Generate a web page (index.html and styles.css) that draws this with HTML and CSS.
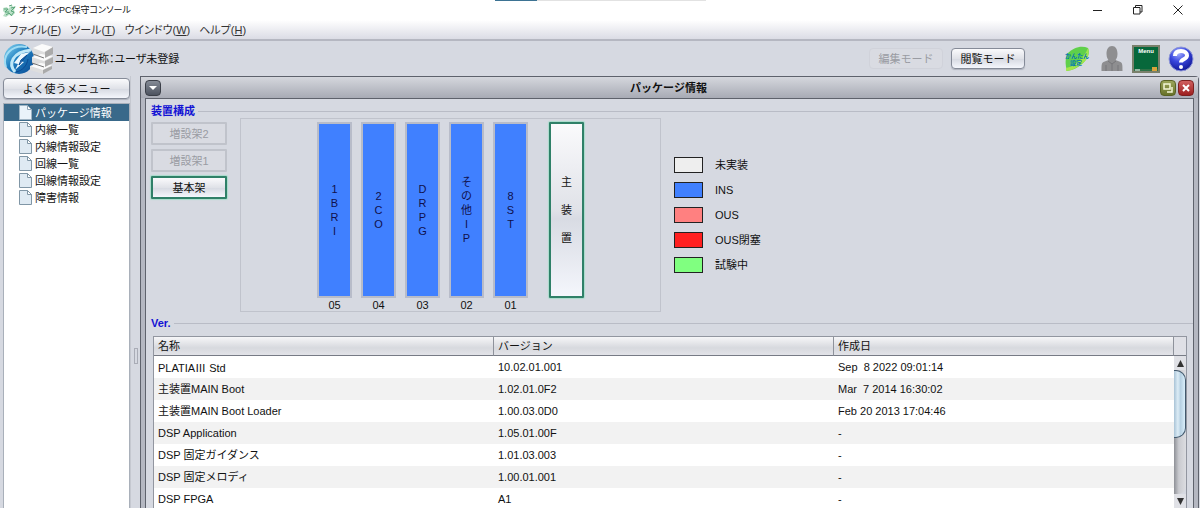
FILE: index.html
```html
<!DOCTYPE html>
<html lang="ja">
<head>
<meta charset="utf-8">
<title>オンラインPC保守コンソール</title>
<link rel="stylesheet" href="styles.css">
</head>
<body>
<header class="titlebar">
  <svg class="app-icon" width="15" height="15" viewBox="0 0 15 15"><path d="M1 5l4-1 1 2 4-4 1 2 3-1-2 4 1 3-3 3-3-1-3 2-3-1 2-3-2-2z" fill="#b9dfc6"/><path d="M2 6h4l-3 3h4M7 3l3-1M9 5l4-1-4 4 3 1-3 4M4 12l3-2 2 2" fill="none" stroke="#5aa67a"/></svg>
  <h1 class="app-name">オンラインPC保守コンソール</h1>
  <div class="progress"></div>
  <div class="window-controls">
    <button class="win-btn" aria-label="最小化"><svg width="10" height="10" viewBox="0 0 10 10"><path d="M0 5.5h9" stroke="#222"/></svg></button>
    <button class="win-btn" aria-label="元に戻す"><svg width="10" height="10" viewBox="0 0 10 10"><path d="M.5 2.500h6.500v6.500h-6.500zM2.500 2.500v-2h6.500v6.500h-2" fill="none" stroke="#222"/></svg></button>
    <button class="win-btn" aria-label="閉じる"><svg width="10" height="10" viewBox="0 0 10 10"><path d="M.5.5l9 9M9.500.5l-9 9" stroke="#222"/></svg></button>
  </div>
</header>
<nav class="menubar">
  <button class="menu-item">ファイル(<u>F</u>)</button>
  <button class="menu-item">ツール(<u>T</u>)</button>
  <button class="menu-item">ウインドウ(<u>W</u>)</button>
  <button class="menu-item">ヘルプ(<u>H</u>)</button>
</nav>
<div class="toolbar">
  <svg class="logo" width="50" height="32" viewBox="0 0 50 32">
    <defs>
      <linearGradient id="globe" x1="0" x2="1" y2="1"><stop offset="0" stop-color="#8fdcf5"/><stop offset=".45" stop-color="#1f7fc0"/><stop offset="1" stop-color="#0a4a94"/></linearGradient>
    </defs>
    <circle cx="16" cy="16" r="15" fill="url(#globe)"/>
    <path d="M3 24C-1 13 8 1 24 4" fill="none" stroke="#9fdcf4" stroke-width="2"/>
    <path d="M12 29C5 21 9 9 28 7" fill="none" stroke="#bfe8f8" stroke-width="3"/>
    <path d="M27 9L18 11l-7 9 4 1-3 6 9-8-4-1z" fill="#edf8fd"/>
    <path d="M18 17l6-5-8 10zM13 29c6-1 11-6 12-13" fill="none" stroke="#0a4a94"/>
    <path d="M30 5l9-4 11 3v7l-8 4-12-4zM29 14l9-3 12 3v6l-8 4-13-4zM27 23l11-3 11 3v3l-9 5-13-4z" fill="#dedede"/>
    <path d="M30 5l9-4 11 3-9 5zM29 14l9-3 12 2-9 5zM27 23l11-3 11 2-9 5z" fill="#fbfbfb"/>
    <path d="M42 9l8-5v7l-8 4zM42 18l8-4v6l-8 4zM40 27l9-4v3l-9 5z" fill="#aaa"/>
    <path d="M30 11l11 4M29 20l12 4" stroke="#777" fill="none"/>
  </svg>
  <p class="user">ユーザ名称：ユーザ未登録</p>
  <div class="modes">
    <button class="metal-btn mode flat" disabled>編集モード</button>
    <button class="metal-btn mode">閲覧モード</button>
  </div>
  <div class="tools">
    <button class="tool" aria-label="かんたん設定"><svg width="28" height="28" viewBox="0 0 28 28"><path d="M4 8C9 3 17 0 24 3c2 5 0 11-6 16-5 4-9 6-15 7C1 19 1 13 4 8z" fill="#5fd04a"/><path d="M2 23C12 21 20 13 24 3c2 7-1 13-8 17-4 3-9 6-14 6z" fill="#a4e64c"/><text x="1" y="13" class="leaf-text">かんたん</text><text x="6" y="20" class="leaf-text">設定</text></svg></button>
    <button class="tool" aria-label="ユーザ"><svg width="24" height="28" viewBox="0 0 24 28"><path d="M6.500 9c0-5 2-8 5.500-8s5.500 3 5.500 8c0 4-2 6-2 6l5 2c2 1 2 3 2 9h-21c0-6 0-8 2-9l5-2s-2-2-2-6z" fill="#8e8e90"/><path d="M8 16l4 3 4-3M12 19v7M6 20v6M18 20v6" fill="none" stroke="#77777a"/></svg></button>
    <button class="tool" aria-label="メニュー"><svg width="28" height="28" viewBox="0 0 28 28"><path d="M1 1h26v26H1z" fill="#07683b" stroke="#7a806b" stroke-width="2"/><path d="M2 25h24" stroke="#5b7a55" stroke-width="1"/><path d="M20 22h5v4h-5z" fill="#d8a33c"/><path d="M3 25h5" stroke="#fff"/><text x="14" y="8" class="board-text">Menu</text></svg></button>
    <button class="tool" aria-label="ヘルプ"><svg width="26" height="28" viewBox="0 0 26 28"><defs><radialGradient id="ball" cx=".4" cy=".25" r=".8"><stop offset="0" stop-color="#a9b4ff"/><stop offset=".45" stop-color="#3a48df"/><stop offset="1" stop-color="#0d138f"/></radialGradient></defs><circle cx="13" cy="14" r="12" fill="url(#ball)" stroke="#8d96d8"/><path d="M7 11c0-3 2-5 6-5s6 2 6 4.500c0 4-6 3.500-6 7" fill="none" stroke="#fff" stroke-width="4"/><circle cx="13" cy="22" r="2" fill="#fff"/></svg></button>
  </div>
</div>
<div class="workspace">
  <aside class="sidebar">
    <button class="metal-btn">よく使うメニュー</button>
    <ul class="tree">
      <li><a class="node selected" href="#package"><svg class="doc" width="13" height="15" viewBox="0 0 13 15"><path d="M.5.5h8l4 4v10H.5z" fill="#eaf3fa" stroke="#9fb4c4"/><path d="M8.500.5v4h4z" fill="#fff" stroke="#8fa5b6"/></svg>パッケージ情報</a></li>
      <li><a class="node" href="#ext"><svg class="doc" width="13" height="15" viewBox="0 0 13 15"><path d="M.5.5h8l4 4v10H.5z" fill="#dfeaf3" stroke="#8096a6"/><path d="M8.500.5v4h4z" fill="#fff" stroke="#8096a6"/></svg>内線一覧</a></li>
      <li><a class="node" href="#extset"><svg class="doc" width="13" height="15" viewBox="0 0 13 15"><path d="M.5.5h8l4 4v10H.5z" fill="#dfeaf3" stroke="#8096a6"/><path d="M8.500.5v4h4z" fill="#fff" stroke="#8096a6"/></svg>内線情報設定</a></li>
      <li><a class="node" href="#line"><svg class="doc" width="13" height="15" viewBox="0 0 13 15"><path d="M.5.5h8l4 4v10H.5z" fill="#dfeaf3" stroke="#8096a6"/><path d="M8.500.5v4h4z" fill="#fff" stroke="#8096a6"/></svg>回線一覧</a></li>
      <li><a class="node" href="#lineset"><svg class="doc" width="13" height="15" viewBox="0 0 13 15"><path d="M.5.5h8l4 4v10H.5z" fill="#dfeaf3" stroke="#8096a6"/><path d="M8.500.5v4h4z" fill="#fff" stroke="#8096a6"/></svg>回線情報設定</a></li>
      <li><a class="node" href="#fault"><svg class="doc" width="13" height="15" viewBox="0 0 13 15"><path d="M.5.5h8l4 4v10H.5z" fill="#dfeaf3" stroke="#8096a6"/><path d="M8.500.5v4h4z" fill="#fff" stroke="#8096a6"/></svg>障害情報</a></li>
    </ul>
  </aside>
  <div class="splitter"><span class="grip"></span></div>
  <main class="frame">
    <header class="frame-head">
      <button class="frame-btn menu" aria-label="ウィンドウメニュー"><svg width="10" height="10" viewBox="0 0 10 10"><path d="M1 3h8L5 7z" fill="#fff"/></svg></button>
      <h2 class="frame-title">パッケージ情報</h2>
      <button class="frame-btn restore" aria-label="縮小"><svg width="10" height="10" viewBox="0 0 10 10"><path d="M1 1h6v5H1zM9 4v5H4" fill="none" stroke="#f4f6d8" stroke-width="1.500"/></svg></button>
      <button class="frame-btn close" aria-label="閉じる"><svg width="10" height="10" viewBox="0 0 10 10"><path d="M2 2l6 6M8 2L2 8" stroke="#fff" stroke-width="2"/></svg></button>
    </header>
    <div class="frame-body">
      <section class="devices">
        <h3 class="group-title">装置構成</h3>
        <div class="device-row">
          <div class="racks">
            <button class="metal-btn rack" disabled>増設架2</button>
            <button class="metal-btn rack" disabled>増設架1</button>
            <button class="metal-btn rack current">基本架</button>
          </div>
          <div class="shelf">
            <div class="slot"><button class="card">1<br>B<br>R<br>I</button><span>05</span></div>
            <div class="slot"><button class="card">2<br>C<br>O</button><span>04</span></div>
            <div class="slot"><button class="card">D<br>R<br>P<br>G</button><span>03</span></div>
            <div class="slot"><button class="card">そ<br>の<br>他<br>I<br>P</button><span>02</span></div>
            <div class="slot"><button class="card">8<br>S<br>T</button><span>01</span></div>
            <button class="metal-btn main-unit current">主<br>装<br>置</button>
          </div>
          <ul class="legend">
            <li><i class="swatch none"></i>未実装</li>
            <li><i class="swatch ins"></i>INS</li>
            <li><i class="swatch ous"></i>OUS</li>
            <li><i class="swatch blocked"></i>OUS閉塞</li>
            <li><i class="swatch testing"></i>試験中</li>
          </ul>
        </div>
      </section>
      <section class="versions">
        <h3 class="group-title">Ver.</h3>
        <div class="grid">
          <table class="table">
            <thead><tr><th>名称</th><th>バージョン</th><th>作成日</th></tr></thead>
            <tbody>
              <tr><td>PLATIA<span class="roman">Ⅲ</span> Std</td><td>10.02.01.001</td><td>Sep&nbsp; 8 2022 09:01:14</td></tr>
              <tr><td>主装置MAIN Boot</td><td>1.02.01.0F2</td><td>Mar&nbsp; 7 2014 16:30:02</td></tr>
              <tr><td>主装置MAIN Boot Loader</td><td>1.00.03.0D0</td><td>Feb 20 2013 17:04:46</td></tr>
              <tr><td>DSP Application</td><td>1.05.01.00F</td><td>-</td></tr>
              <tr><td>DSP 固定ガイダンス</td><td>1.01.03.003</td><td>-</td></tr>
              <tr><td>DSP 固定メロディ</td><td>1.00.01.001</td><td>-</td></tr>
              <tr><td>DSP FPGA</td><td>A1</td><td>-</td></tr>
            </tbody>
          </table>
          <div class="scroll">
            <div class="corner"></div>
            <button class="arrow" aria-label="上へ"><svg width="7" height="7" viewBox="0 0 7 7"><path d="M3.500 0L7 7H0z" fill="#333"/></svg></button>
            <div class="track"><div class="thumb"></div></div>
            <button class="arrow" aria-label="下へ"><svg width="7" height="7" viewBox="0 0 7 7"><path d="M3.500 7L7 0H0z" fill="#333"/></svg></button>
          </div>
        </div>
      </section>
    </div>
  </main>
</div>
</body>
</html>
```
FILE: styles.css
```css
* { box-sizing: border-box; }
body {
  margin: 0;
  height: 100vh;
  overflow: hidden;
  display: flex;
  flex-direction: column;
  background: #d6d9e1;
  color: #111;
  font: 11px/14px "Liberation Sans", "Noto Sans CJK JP", sans-serif;
}
button { font: inherit; color: inherit; padding: 0; border: 0; background: none; }
h1, h2, h3, p, ul { margin: 0; padding: 0; font-size: 11px; }
ul { list-style: none; }
svg { display: block; flex: none; }

.titlebar { position: relative; flex: none; height: 20px; display: flex; align-items: center; background: #fff; }
.app-icon { margin: 0 2px; }
.app-name { font-weight: 400; font-size: 9px; font-feature-settings: "palt"; flex: 1; }
.progress { position: absolute; top: 0; left: 495px; width: 211px; height: 1px; background: linear-gradient(90deg, #3d7393 42px, #e2e2e2 42px); }
.window-controls { display: flex; padding-right: 2px; }
.win-btn { width: 40px; height: 18px; display: flex; align-items: center; justify-content: center; }

.menubar { flex: none; height: 21px; padding-left: 9px; display: flex; gap: 9px; background: linear-gradient(#fff, #dbdce5); border-bottom: 2px solid #b5b7c1; }
.menu-item { font-feature-settings: "palt"; color: #333; white-space: nowrap; }

.toolbar { flex: none; height: 35px; display: flex; align-items: center; padding: 0 6px 0 3px; }
.user { margin-left: 2px; flex: 1; font-feature-settings: "palt"; }
.modes { display: flex; gap: 8px; }
.tools { display: flex; gap: 8px; margin-left: 39px; }
.leaf-text { font: bold 6px "Noto Sans CJK JP", sans-serif; fill: #0878b4; }
.board-text { font: bold 6px "Liberation Sans", sans-serif; fill: #fff; text-anchor: middle; }

.metal-btn {
  height: 21px;
  border: 1px solid #858b98;
  border-radius: 4px;
  background: linear-gradient(#fafafc, #e0e2e8 50%, #d8dbe3 55%, #f4f6fc);
  box-shadow: 0 1px 1px #aeb2bd;
  white-space: nowrap;
}
.metal-btn:disabled { color: #9a9ca3; border-color: #c0c3cb; background: #d9dbe2; box-shadow: none; }
.mode { width: 74px; }
.mode.flat:disabled { border-color: #d0d2da; }

.workspace { flex: 1; min-height: 0; display: flex; }
.sidebar { flex: none; width: 130px; padding: 2px 0 0 3px; display: flex; flex-direction: column; gap: 4px; }
.sidebar .metal-btn { flex: none; }
.tree { flex: 1; background: #fff; border: 1px solid #a9b0ba; border-bottom: 0; }
.node { display: flex; align-items: center; gap: 3px; height: 17px; padding-left: 15px; color: #111; text-decoration: none; white-space: nowrap; }
.node.selected { background: #39698a; color: #fff; }
.splitter { flex: none; width: 10px; display: flex; align-items: center; justify-content: center; border-left: 1px solid #c5c8d0; }
.grip { width: 4px; height: 16px; margin-top: 128px; border: 1px solid #a9acb6; }

.frame { flex: 1; min-width: 0; margin-right: 1px; display: flex; flex-direction: column; border: 1px solid #5e626c; border-bottom: 0; border-top-right-radius: 4px; background: #b4b7c1; }
.frame-head { flex: none; height: 21px; padding: 0 4px; display: flex; align-items: center; gap: 2px; background: linear-gradient(#d5d7dd, #a8abb5); }
.frame-title { flex: 1; padding-left: 16px; text-align: center; }
.frame-btn { width: 16px; height: 16px; border: 1px solid #3b3f48; border-radius: 4px; display: flex; align-items: center; justify-content: center; }
.frame-btn.menu { background: linear-gradient(#858b96, #4d535f); }
.frame-btn.restore { background: linear-gradient(#9ba55b, #68722a); border-color: #596225; }
.frame-btn.close { background: linear-gradient(#d0605f, #9d1f20); border-color: #7d2020; }
.frame-body { flex: 1; min-height: 0; margin: 0 4px; padding: 5px 0 0 5px; display: flex; flex-direction: column; gap: 4px; border: 1px solid #5e626c; border-width: 1px 1px 0; background: #d6d9e1; }

.group-title { display: flex; align-items: center; gap: 3px; color: #1212d4; }
.group-title::after { content: ""; flex: 1; height: 1px; background: #b9bcc6; }
.device-row { display: flex; align-items: flex-start; gap: 13px; }
.racks { width: 76px; padding-top: 4px; display: flex; flex-direction: column; gap: 4px; }
.rack { height: 23px; border-width: 2px; border-radius: 1px; }
.metal-btn.current { border: 2px solid #2f8068; border-radius: 1px; box-shadow: 0 0 1px 1px #a8dccb; }
.shelf { width: 421px; height: 194px; padding: 3px 0 0 76px; display: flex; align-items: flex-start; gap: 9px; border: 1px solid #c0c3cc; }
.slot { display: flex; flex-direction: column; align-items: center; }
.card { width: 35px; height: 176px; border: 2px solid #b8bcc9; background: #4080ff; color: #10104c; }
.main-unit { width: 35px; height: 176px; margin-left: 12px; line-height: 28px; }
.legend { padding-top: 35px; display: grid; gap: 1px; }
.legend li { height: 24px; display: flex; align-items: center; gap: 12px; }
.swatch { width: 29px; height: 16px; border: 1px solid #222; }
.none { background: #eee; }
.ins { background: #4080ff; }
.ous { background: #ff8080; }
.blocked { background: #ff2020; }
.testing { background: #80ff80; }

.versions { flex: 1; min-height: 0; display: flex; flex-direction: column; gap: 6px; }
.grid { flex: 1; min-height: 0; margin: 0 6px 0 2px; display: flex; overflow: hidden; border-top: 1px solid #9296a0; border-left: 1px solid #9296a0; }
.table { flex: 1; width: 100%; min-width: 0; align-self: flex-start; table-layout: fixed; border-collapse: separate; border-spacing: 0; background: #fff; }
.table th { height: 19px; padding: 0 4px; text-align: left; font-weight: 400; background: linear-gradient(#f6f6f8, #d7d9de 60%, #e2e3e8); border-right: 1px solid #8e929b; border-bottom: 1px solid #777b85; }
.table td { height: 22px; padding: 0 4px; white-space: nowrap; line-height: 14px; }
.table tbody tr:nth-child(even) { background: #f2f2f2; }
.roman { font-family: "Noto Sans CJK JP", sans-serif; }
.scroll { flex: none; width: 13px; display: flex; flex-direction: column; border-right: 1px solid #9296a0; }
.corner { flex: none; height: 19px; background: #dfe0e6; border-bottom: 1px solid #777b85; }
.arrow { flex: none; height: 14px; display: flex; align-items: center; justify-content: center; background: #e0e1e6; }
.track { flex: 1; min-height: 0; background: linear-gradient(90deg, #8e9096, #c9cacf 40%, #dcdde1); border-bottom-right-radius: 8px; }
.thumb { height: 68px; border: 1px solid #42586c; border-left: 0; border-radius: 0 10px 10px 0; background: linear-gradient(90deg, #a9c3d6, #dcecf6 35%, #b6d0e2 60%, #d9eefa); }
```
